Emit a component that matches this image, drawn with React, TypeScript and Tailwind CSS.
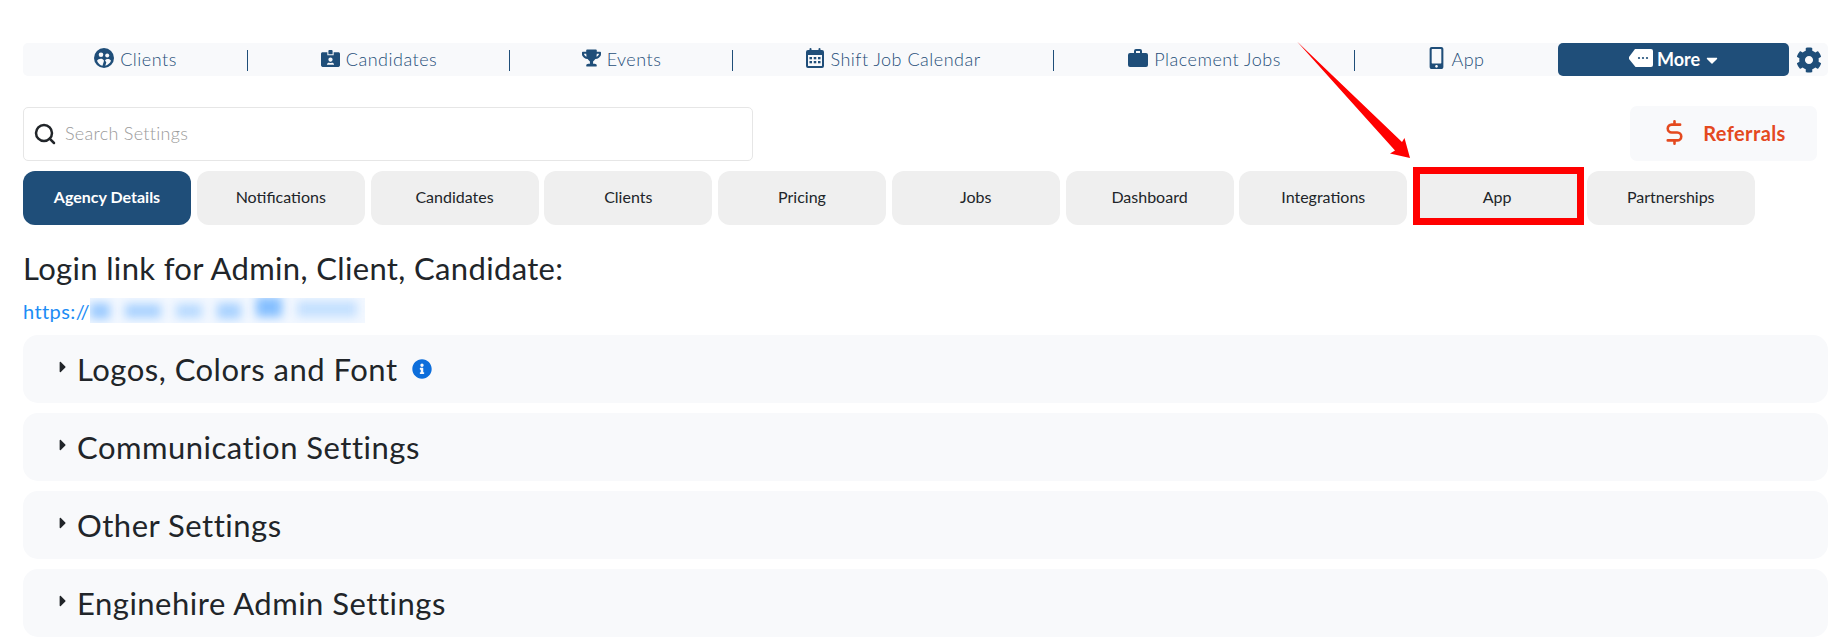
import { FaCaretDown, FaCaretRight, FaCog, FaIdCardAlt, FaInfoCircle, FaMobileAlt, FaTrophy } from 'react-icons/fa'
import { Search } from 'lucide-react'
import type { ReactNode } from 'react'

function ClientsIcon() {
  return (
    <svg viewBox="0 0 20 20" className="h-[20px] w-[20px]" fill="currentColor">
      <circle cx="10" cy="10" r="10" />
      <circle cx="7" cy="6.800" r="2.300" fill="#f8f9fb" />
      <circle cx="13.200" cy="7.400" r="2" fill="#f8f9fb" />
      <path d="M3 12.800c1.200-2.600 6-2.800 7 0l-1.500 5C6 17.300 4 15.500 3 12.800z" fill="#f8f9fb" />
      <path d="M11 12.300c1.500-2 5-1.800 6 .5-.9 2.400-3 4.200-5.700 4.900l1-3.200z" fill="#f8f9fb" />
    </svg>
  )
}

function CalendarIcon() {
  return (
    <svg viewBox="0 0 18 20" className="h-[20px] w-[18px]" fill="currentColor">
      <rect x="3.500" y="0" width="2" height="4" rx="1" />
      <rect x="12.500" y="0" width="2" height="4" rx="1" />
      <path fillRule="evenodd" d="M2 2h14a2 2 0 0 1 2 2v14a2 2 0 0 1-2 2H2a2 2 0 0 1-2-2V4a2 2 0 0 1 2-2zM2 7v10.500a.5.5 0 0 0 .5.5h13a.5.5 0 0 0 .5-.5V7z" />
      <rect x="3.500" y="9" width="2.500" height="2.300" />
      <rect x="7.750" y="9" width="2.500" height="2.300" />
      <rect x="12" y="9" width="2.500" height="2.300" />
      <rect x="3.500" y="13" width="2.500" height="2.300" />
      <rect x="7.750" y="13" width="2.500" height="2.300" />
      <rect x="12" y="13" width="2.500" height="2.300" />
    </svg>
  )
}

function BriefcaseIcon() {
  return (
    <svg viewBox="0 0 20 18" className="h-[18px] w-[20px]" fill="currentColor">
      <path fillRule="evenodd" d="M6 4V2a2 2 0 0 1 2-2h4a2 2 0 0 1 2 2v2h4a2 2 0 0 1 2 2v10a2 2 0 0 1-2 2H2a2 2 0 0 1-2-2V6a2 2 0 0 1 2-2zm2 0h4V2H8z" />
    </svg>
  )
}

function MoreTagIcon() {
  return (
    <svg viewBox="0 0 24 18" className="h-[18px] w-[24px]" fill="white">
      <path d="M6 0h16a2 2 0 0 1 2 2v14a2 2 0 0 1-2 2H6.500L0 10V8z" />
      <circle cx="10" cy="9" r="1.100" fill="#1f4e79" />
      <circle cx="14" cy="9" r="1.100" fill="#1f4e79" />
      <circle cx="18" cy="9" r="1.100" fill="#1f4e79" />
    </svg>
  )
}

const navItems: { label: string; icon: ReactNode; width: string; last?: boolean }[] = [
  { label: 'Clients', icon: <ClientsIcon />, width: 'w-[225px]' },
  { label: 'Candidates', icon: <FaIdCardAlt className="h-[19px] w-[19px]" />, width: 'w-[262px]' },
  { label: 'Events', icon: <FaTrophy className="h-[18px] w-[19px]" />, width: 'w-[223px]' },
  { label: 'Shift Job Calendar', icon: <CalendarIcon />, width: 'w-[321px]' },
  { label: 'Placement Jobs', icon: <BriefcaseIcon />, width: 'w-[301px]' },
  { label: 'App', icon: <FaMobileAlt className="h-[22px] w-[17px]" />, width: 'w-[203px]', last: true },
]

const tabs = ['Agency Details', 'Notifications', 'Candidates', 'Clients', 'Pricing', 'Jobs', 'Dashboard', 'Integrations', 'App', 'Partnerships']

const sections = ['Logos, Colors and Font', 'Communication Settings', 'Other Settings', 'Enginehire Admin Settings']

export default function App() {
  return (
    <div className="relative h-[641px] overflow-hidden bg-white pl-[23px] pr-[7px] pt-[43px] font-['Lato',sans-serif] text-[#212529]">
      <nav className="flex h-[33px] items-stretch rounded-[5px] bg-[#f8f9fb]">
        {navItems.map((item) => (
          <div key={item.label} className={`${item.width} relative flex items-center justify-center gap-[6px] text-[#1f4e79]`}>
            <span className="-mt-[3px]">{item.icon}</span>
            <span className="text-[18px] font-light tracking-[0.5px] text-[#1f4e79]">{item.label}</span>
            {!item.last && <span className="absolute right-0 top-[7px] h-[21px] w-px bg-[#1f4e79]" />}
          </div>
        ))}
        <button className="flex w-[231px] items-center justify-center gap-[4px] rounded-[5px] bg-[#1f4e79] pl-[2px] text-[18px] font-bold text-white">
          <span className="-mt-[4px]">
            <MoreTagIcon />
          </span>
          More
          <FaCaretDown className="h-[18px] w-[16px]" />
        </button>
        <FaCog className="ml-[7px] h-[26px] w-[26px] self-center text-[#1f4e79]" />
      </nav>

      <div className="mt-[30px] flex items-center justify-between pr-[11px]">
        <div className="flex h-[54px] w-[730px] items-center gap-[8px] rounded-[5px] border border-[#e6e6e6] bg-white pl-[9px]">
          <Search className="h-[24px] w-[24px] text-[#212529]" strokeWidth={2.500} />
          <span className="text-[18px] font-light tracking-[0.3px] text-[#9a9a9a]">Search Settings</span>
        </div>
        <div className="flex h-[55px] w-[187px] items-center justify-center gap-[15px] rounded-[7px] bg-[#f8f9fb] pb-[2px] text-[20px] font-bold tracking-[0.4px] text-[#e4491f]">
          <svg viewBox="0 0 24 24" className="h-[27px] w-[27px]" fill="none" stroke="currentColor" strokeWidth={2.300} strokeLinecap="round" strokeLinejoin="round">
            <path d="M17 5H9.500a3.500 3.500 0 0 0 0 7h5a3.500 3.500 0 0 1 0 7H6" />
            <path d="M12 2v3M12 19v3" />
          </svg>
          Referrals
        </div>
      </div>

      <div className="mt-[10px] flex gap-[5.750px]">
        {tabs.map((tab, i) => (
          <div
            key={tab}
            className={`relative flex h-[54px] w-[168px] items-center justify-center rounded-[12px] pb-[3px] text-[16px] ${
              i === 0 ? 'bg-[#1f4e79] font-bold text-white' : 'bg-[#efefef] text-[#212529]'
            }`}
          >
            {tab}
            {tab === 'App' && <span className="absolute -top-[4px] bottom-0 left-0 -right-[3px] border-[7px] border-[#ff0000]" />}
          </div>
        ))}
      </div>

      <h2 className="mt-[24px] text-[31px] leading-[38px] tracking-[0.35px]">Login link for Admin, Client, Candidate:</h2>
      <div className="mt-[8px] flex h-[31px] items-center text-[20px] tracking-[0.4px] text-[#1c8cf5]">
        https://
        <span className="relative h-[25px] w-[275px] overflow-hidden bg-[#f3f8ff]">
          <span className="flex h-full items-center gap-[15px] blur-[5px]">
            <span className="h-[16px] w-[20px] shrink-0 bg-[#9ccbff]" />
            <span className="h-[14px] w-[36px] shrink-0 bg-[#a9d2ff]" />
            <span className="h-[14px] w-[26px] shrink-0 bg-[#b8daff]" />
            <span className="h-[16px] w-[24px] shrink-0 bg-[#a9d2ff]" />
            <span className="-mt-[8px] h-[20px] w-[26px] shrink-0 bg-[#85bfff]" />
            <span className="-mt-[4px] h-[16px] w-[60px] shrink-0 bg-[#c4e0ff]" />
          </span>
        </span>
      </div>

      <div className="mt-[9px] flex flex-col gap-[10px]">
        {sections.map((section, i) => (
          <div key={section} className="flex h-[68px] items-center rounded-[15px] bg-[#f8f9fb] pl-[32px] text-[31px] tracking-[0.5px]">
            <FaCaretRight className="-mt-[4px] mr-[6px] h-[18px] w-[16px] text-[#212529]" />
            {section}
            {i === 0 && <FaInfoCircle className="ml-[14px] h-[20px] w-[20px] text-[#0d6edb]" />}
          </div>
        ))}
      </div>

      {/* annotation arrow, sits on top of the page */}
      <svg className="pointer-events-none absolute left-[1290px] top-[40px] h-[130px] w-[160px]" viewBox="0 0 160 130" fill="#ff0000">
        <path d="M7 1.500 L112 102 L114.500 98 L120 118 L100 113.500 L105 110.500 Z" />
      </svg>
    </div>
  )
}
